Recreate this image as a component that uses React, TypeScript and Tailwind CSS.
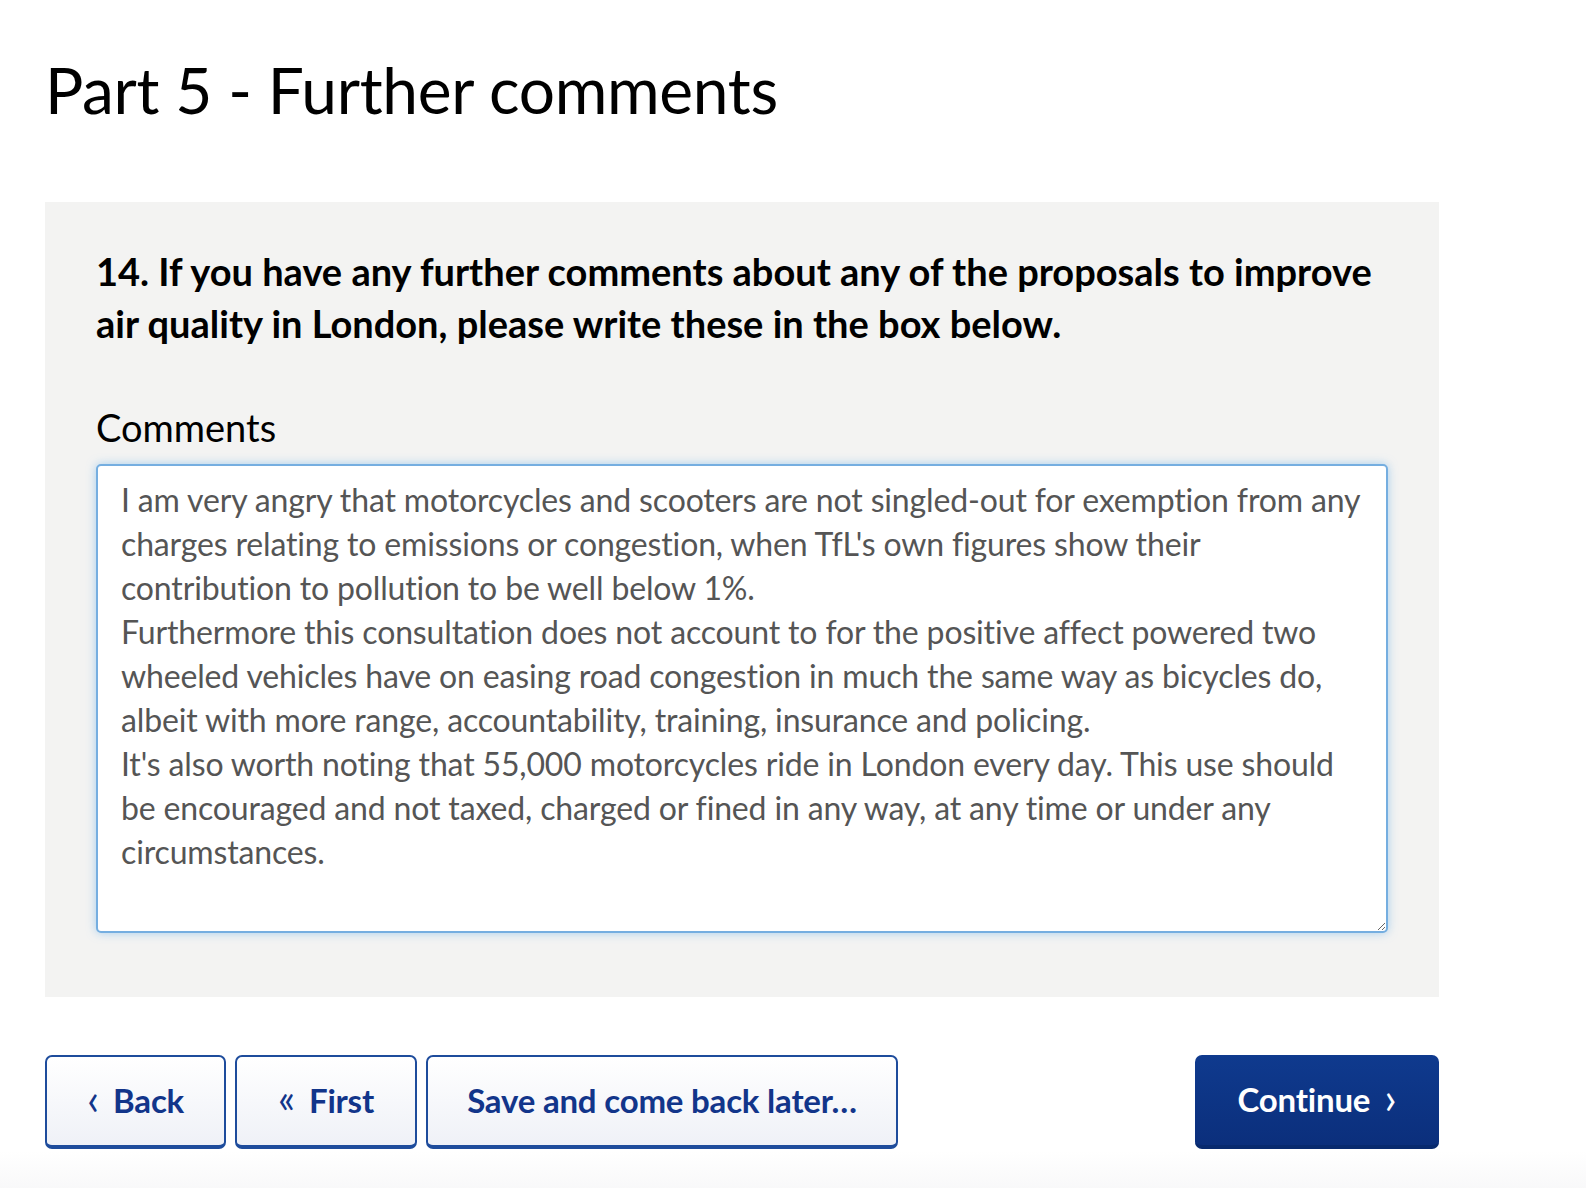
const COMMENT_TEXT =
  "I am very angry that motorcycles and scooters are not singled-out for exemption from any charges relating to emissions or congestion, when TfL's own figures show their contribution to pollution to be well below 1%.\n" +
  'Furthermore this consultation does not account to for the positive affect powered two wheeled vehicles have on easing road congestion in much the same way as bicycles do, albeit with more range, accountability, training, insurance and policing.\n' +
  "It's also worth noting that 55,000 motorcycles ride in London every day. This use should be encouraged and not taxed, charged or fined in any way, at any time or under any circumstances."

const navBtn =
  'h-[94px] flex items-center justify-center rounded-[7px] border-2 border-b-4 border-[#1e4c9c] bg-gradient-to-b from-white to-[#eff1f7] text-[33px] font-bold text-[#12358a] tracking-[-0.2px]'

export default function App() {
  return (
    <div className="min-h-[1188px] bg-white font-['Lato','Noto_Sans',sans-serif] text-black">
      <div className="pl-[45px] pr-[147px] pt-[48px]">
        <h1 className="text-[64px] leading-[84px] font-normal tracking-[-0.3px]">Part 5 - Further comments</h1>

        <div className="mt-[70px] bg-[#f3f3f2] px-[51px] pt-[43px] pb-[64px]">
          <h2 className="text-[38px] leading-[52px] font-bold">
            14. If you have any further comments about any of the proposals to improve air quality in London, please write these in the box below.
          </h2>

          <label htmlFor="comments" className="block mt-[54px] text-[38px] leading-[48px]">Comments</label>

          <textarea
            id="comments"
            defaultValue={COMMENT_TEXT}
            className="mt-[13px] block w-full h-[469px] rounded-[5px] border-2 border-[#75aee0] bg-white pl-[23px] pr-[20px] pt-[12px] text-[32px] leading-[44px] text-[#555] tracking-[-0.15px] shadow-[0_0_10px_rgba(102,175,233,0.55)] outline-none resize-y"
          />
        </div>

        <div className="mt-[58px] flex items-stretch">
          <div className="flex gap-[9px]">
            <button className={navBtn + ' w-[181px] gap-[14px]'}>
              <span className="font-normal text-[44px] leading-none pb-[6px]">‹</span>
              Back
            </button>
            <button className={navBtn + ' w-[182px] gap-[14px]'}>
              <span className="font-normal text-[40px] leading-none pb-[6px]">«</span>
              First
            </button>
            <button className={navBtn + ' w-[472px]'}>
              Save and come back later…
            </button>
          </div>
          <button className="ml-auto h-[94px] w-[244px] flex items-center justify-center gap-[14px] rounded-[7px] border-b-4 border-[#082a6e] bg-gradient-to-b from-[#0f3a8e] to-[#0b2f7c] text-[33px] font-bold text-white tracking-[-0.2px]">
            Continue
            <span className="font-normal text-[44px] leading-none pb-[6px]">›</span>
          </button>
        </div>
      </div>
      <div className="mt-[2px] h-[40px] bg-gradient-to-b from-white to-[#f8f8f9]" />
    </div>
  )
}
